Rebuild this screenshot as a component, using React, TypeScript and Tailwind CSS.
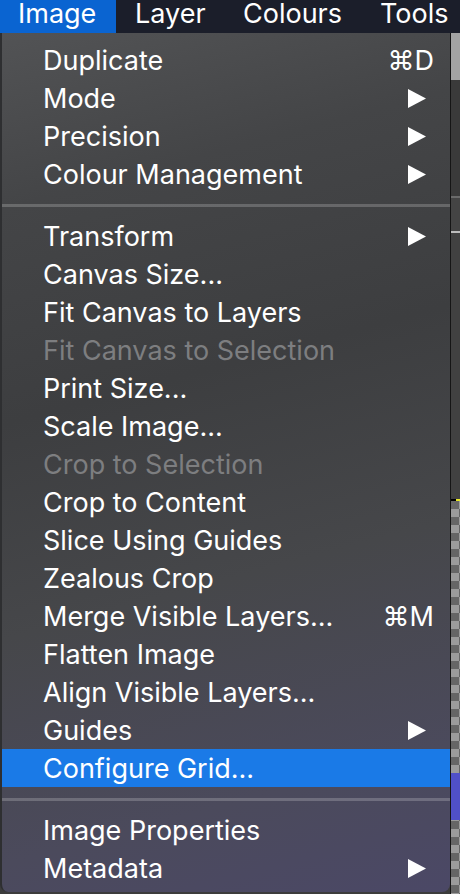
import React from 'react';

type Item =
  | { kind: 'item'; label: string; shortcut?: string; submenu?: boolean; disabled?: boolean; active?: boolean }
  | { kind: 'sep' };

const items: Item[] = [
  { kind: 'item', label: 'Duplicate', shortcut: '⌘D' },
  { kind: 'item', label: 'Mode', submenu: true },
  { kind: 'item', label: 'Precision', submenu: true },
  { kind: 'item', label: 'Colour Management', submenu: true },
  { kind: 'sep' },
  { kind: 'item', label: 'Transform', submenu: true },
  { kind: 'item', label: 'Canvas Size...' },
  { kind: 'item', label: 'Fit Canvas to Layers' },
  { kind: 'item', label: 'Fit Canvas to Selection', disabled: true },
  { kind: 'item', label: 'Print Size...' },
  { kind: 'item', label: 'Scale Image...' },
  { kind: 'item', label: 'Crop to Selection', disabled: true },
  { kind: 'item', label: 'Crop to Content' },
  { kind: 'item', label: 'Slice Using Guides' },
  { kind: 'item', label: 'Zealous Crop' },
  { kind: 'item', label: 'Merge Visible Layers...', shortcut: '⌘M' },
  { kind: 'item', label: 'Flatten Image' },
  { kind: 'item', label: 'Align Visible Layers...' },
  { kind: 'item', label: 'Guides', submenu: true },
  { kind: 'item', label: 'Configure Grid...', active: true },
  { kind: 'sep' },
  { kind: 'item', label: 'Image Properties' },
  { kind: 'item', label: 'Metadata', submenu: true },
];

function Arrow() {
  return (
    <svg width="18" height="19" viewBox="0 0 18 19" className="shrink-0">
      <polygon points="0,0 18,9.5 0,19" fill="#ffffff" />
    </svg>
  );
}

export default function App() {
  return (
    <div
      className="w-[460px] h-[894px] overflow-hidden flex flex-col bg-[#3c3c3c] text-white"
      style={{ fontFamily: 'Inter, "Liberation Sans", sans-serif' }}
    >
      {/* top menu bar */}
      <div className="h-[33px] flex bg-[#1b1e2a] text-[27px] leading-none shrink-0">
        <div className="h-full flex items-center pb-[6px] pl-[18px] w-[116px] bg-[#0a64d1]">Image</div>
        <div className="h-full flex items-center pb-[6px] pl-[19px] w-[127px]">Layer</div>
        <div className="h-full flex items-center pb-[6px] w-[137px]">Colours</div>
        <div className="h-full flex items-center pb-[6px]">Tools</div>
      </div>

      <div className="flex flex-1 min-h-0">
        {/* dropdown */}
        <div className="w-[450px] h-[859px] rounded-b-[8px] border-l-2 border-[#2e2f31] bg-[linear-gradient(165deg,#525355_0%,#444547_18%,#3d3e40_40%,#46474a_62%,#4b4a5c_85%,#4b4866_100%)] pt-[8px] flex flex-col shrink-0">
          {items.map((it, idx) =>
            it.kind === 'sep' ? (
              <div key={idx} className="h-[24px] flex items-center">
                <div className="h-[3px] w-full bg-white/20" />
              </div>
            ) : (
              <div
                key={idx}
                className={`h-[38px] flex items-center pl-[41px] text-[27px] leading-none ${
                  it.active ? 'bg-[#1a7ae7]' : ''
                } ${it.disabled ? 'text-[#7d7e80]' : 'text-white'}`}
              >
                <span className="flex-1">{it.label}</span>
                {it.shortcut && <span className="mr-[16px]">{it.shortcut}</span>}
                {it.submenu && (
                  <span className="mr-[24px] flex items-center">
                    <Arrow />
                  </span>
                )}
              </div>
            )
          )}
        </div>

        <div className="w-px bg-[#151515] shrink-0" />

        {/* background app strip */}
        <div className="flex-1 flex flex-col">
          <div className="h-[47px] bg-[#a3a3a3] shrink-0" />
          <div className="h-[116px] bg-[#3a3a3a] shrink-0" />
          <div className="h-[2px] bg-[#6a6a6a] shrink-0" />
          <div className="h-[33px] bg-[#444444] shrink-0" />
          <div className="h-[2px] bg-[#bdbdbd] shrink-0" />
          <div className="h-[266px] bg-[#414141] shrink-0" />
          <div className="h-[2px] flex shrink-0">
            <div className="w-[5px] bg-black" />
            <div className="flex-1 bg-[#e8e82a]" />
          </div>
          <div className="relative flex-1 bg-[repeating-conic-gradient(#9b9b9b_0%_25%,#666666_0%_50%)] bg-[length:16px_16px]">
            <div className="absolute left-0 right-0 top-[272px] h-[47px] bg-[#5050c8]" />
          </div>
        </div>
      </div>
    </div>
  );
}
